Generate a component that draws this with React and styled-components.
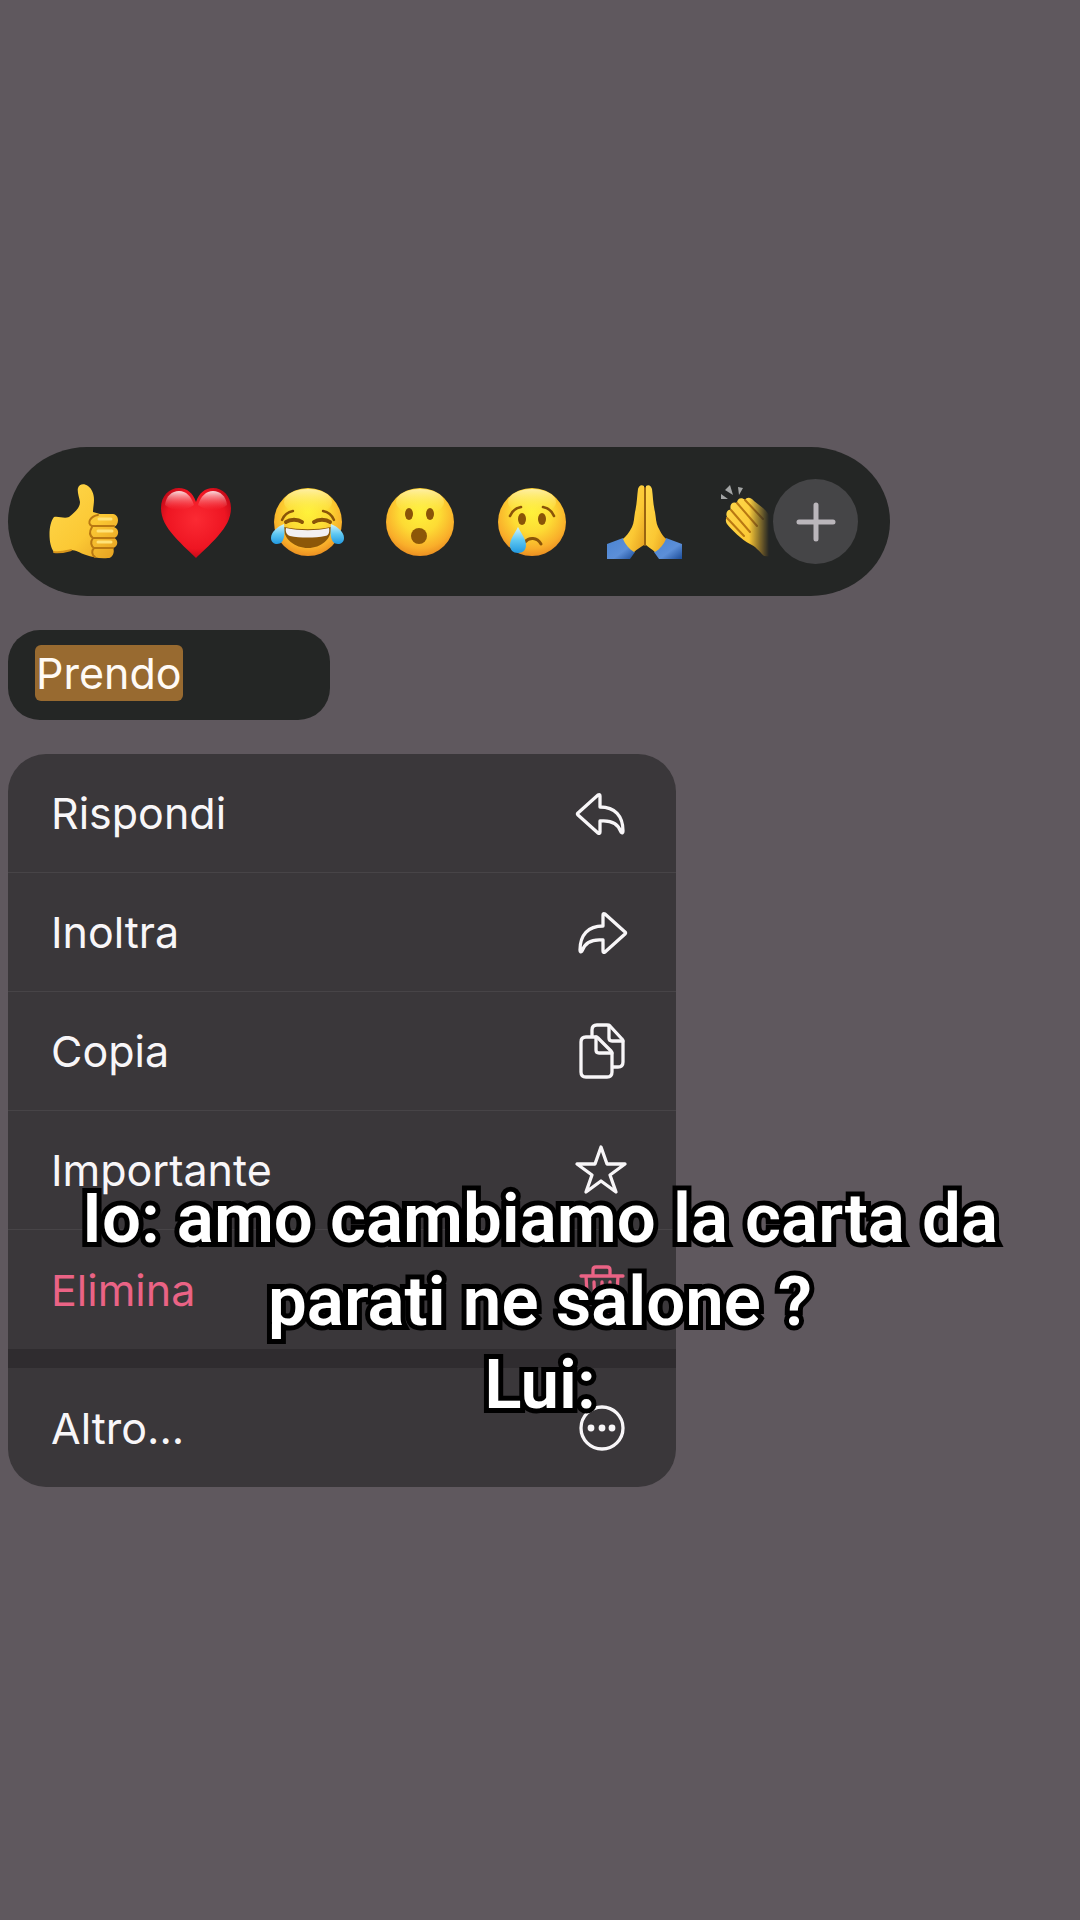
import React from 'react';
import styled, { createGlobalStyle } from 'styled-components';

const GlobalStyle = createGlobalStyle`
  * {
    box-sizing: border-box;
  }
  body {
    margin: 0;
    background-color: #5f585e;
    font-family: Inter, 'Liberation Sans', sans-serif;
  }
  button {
    padding: 0;
    border: 0;
    background: none;
    color: inherit;
    font: inherit;
    cursor: pointer;
  }
`;

const Screen = styled.main`
  position: relative;
  display: flex;
  flex-direction: column;
  align-items: flex-start;
  min-height: 100vh;
  padding: 447px 8px 0;
  overflow: hidden;
`;

const Reactions = styled.section`
  display: flex;
  align-items: center;
  width: 100%;
  max-width: 882px;
  height: 149px;
  margin-bottom: 34px;
  padding: 0 32px 0 37px;
  border-radius: 80px / 75px;
  background-color: #242625;
`;

const EmojiList = styled.div`
  flex: 1;
  display: flex;
  gap: 36px;
  min-width: 0;
  overflow: hidden;
  mask-image: linear-gradient(to right, #000 calc(100% - 24px), transparent calc(100% - 4px));
`;

const EmojiButton = styled.button`
  flex: none;
  width: 76px;
  height: 76px;
  svg {
    display: block;
    overflow: visible;
  }
`;

const PlusButton = styled.button`
  flex: none;
  display: flex;
  align-items: center;
  justify-content: center;
  width: 85px;
  height: 85px;
  border-radius: 50%;
  background-color: #454547;
`;

const Bubble = styled.div`
  display: flex;
  align-items: flex-start;
  width: 322px;
  height: 90px;
  margin-bottom: 34px;
  padding: 15px 27px;
  border-radius: 32px;
  background-color: #242625;
`;

const Highlight = styled.mark`
  padding: 0 1px;
  border-radius: 6px;
  background-color: #986a30;
  color: #fffaf5;
  font-size: 43px;
  line-height: 56px;
`;

const Menu = styled.nav`
  width: 100%;
  max-width: 668px;
  border-radius: 38px;
  background-color: #3a373a;
  overflow: hidden;
`;

const Group = styled.ul`
  margin: 0;
  padding: 0;
  list-style: none;
  & + & {
    border-top: 19px solid #2f2c2f;
  }
`;

const Item = styled.li`
  height: 119px;
  &:not(:last-child) {
    border-bottom: 1px solid #474447;
  }
`;

const ItemButton = styled.button`
  display: flex;
  align-items: center;
  justify-content: space-between;
  width: 100%;
  height: 100%;
  padding: 0 47px 0 43px;
  color: ${(props) => (props.$danger ? '#ea6385' : '#f8f6f8')};
  font-size: 43px;
  line-height: 56px;
`;

const Caption = styled.p`
  position: absolute;
  left: 0;
  right: 0;
  top: 1177px;
  margin: 0;
  color: #fff;
  font-family: Roboto, 'Liberation Sans', sans-serif;
  font-size: 69px;
  font-weight: 600;
  line-height: 83px;
  text-align: center;
  white-space: pre-line;
  -webkit-text-stroke: 10px #000;
  paint-order: stroke fill;
  stroke-linejoin: round;
  pointer-events: none;
`;

const Defs = () => (
  <svg width="0" height="0" style={{ display: 'block', height: 0 }} aria-hidden="true">
    <defs>
      <radialGradient id="face" cx="0.5" cy="0.36" r="0.66">
        <stop offset="0" stopColor="#fff23a" />
        <stop offset="0.45" stopColor="#fddb34" />
        <stop offset="0.8" stopColor="#f9ae2a" />
        <stop offset="1" stopColor="#e88a20" />
      </radialGradient>
      <linearGradient id="shine" x1="0" y1="0" x2="0" y2="1">
        <stop offset="0" stopColor="#fff6c0" stopOpacity="0.8" />
        <stop offset="1" stopColor="#fff23a" stopOpacity="0" />
      </linearGradient>
      <linearGradient id="skin" x1="0" y1="0" x2="1" y2="1">
        <stop offset="0" stopColor="#ffd84c" />
        <stop offset="0.6" stopColor="#fbc834" />
        <stop offset="1" stopColor="#e59f20" />
      </linearGradient>
      <radialGradient id="heart" cx="0.5" cy="0.45" r="0.6">
        <stop offset="0" stopColor="#fb2a33" />
        <stop offset="0.7" stopColor="#ee1522" />
        <stop offset="1" stopColor="#b80615" />
      </radialGradient>
      <linearGradient id="heartShine" x1="0" y1="0" x2="0" y2="1">
        <stop offset="0" stopColor="#fff" stopOpacity="0.85" />
        <stop offset="1" stopColor="#ff5a60" stopOpacity="0" />
      </linearGradient>
      <linearGradient id="tear" x1="0" y1="0" x2="0" y2="1">
        <stop offset="0" stopColor="#d4f3fb" />
        <stop offset="0.5" stopColor="#5fc8f2" />
        <stop offset="1" stopColor="#2299e0" />
      </linearGradient>
      <linearGradient id="sleeve" x1="0" y1="0" x2="1" y2="1">
        <stop offset="0" stopColor="#4a84d2" />
        <stop offset="0.6" stopColor="#5c8fd8" />
        <stop offset="1" stopColor="#1c4c98" />
      </linearGradient>
    </defs>
  </svg>
);

const Emoji = ({ children }) => (
  <svg width="76" height="76" viewBox="0 0 76 76" fill="none" strokeLinecap="round" aria-hidden="true">
    {children}
  </svg>
);

const Face = () => (
  <>
    <circle cx="39" cy="38" r="34" fill="url(#face)" />
    <ellipse cx="39" cy="18" rx="24" ry="13" fill="url(#shine)" />
  </>
);

const ThumbsUp = () => (
  <Emoji>
    <path
      d="M9 33C14 32 19 35 24 33C29 29 35 24 35 18C34 13 32 7 33 4C34 0 39 -1 43 2C47 5 49 10 49 16C49 20 48 24 48 28L55 30H68C75 31 74 41 69 43C75 45 74 53 69 54C74 56 73 63 68 64C70 67 68 74 63 74C55 75 47 73 41 71C35 69 31 66 26 66C20 67 15 69 9 68C3 61 3 40 9 33Z"
      fill="url(#skin)"
    />
    <path d="M53 31C46 32 41 39 47 42H69M47 43C44 48 45 52 48 54H69M48 54C45 58 46 62 49 64H68M49 64C46 67 47 71 50 73" stroke="#b87812" strokeWidth="2" />
    <path d="M26 66C22 67 16 69 9 68" stroke="#d8951c" strokeWidth="2" />
    <path d="M54 35H66M53 47H67M53 58H66" stroke="#ffe277" strokeWidth="3" />
  </Emoji>
);

const Heart = () => (
  <Emoji>
    <path
      d="M39 74C36 71 25 61 17 52C9 43 4 34 4 24C4 12 12 4 22 4C30 4 36 9 39 18C42 9 48 4 56 4C66 4 74 12 74 24C74 34 69 43 61 52C53 61 42 71 39 74Z"
      fill="url(#heart)"
    />
    <path d="M8 21C9 12 15 7 22 7C29 7 34 12 37 21C30 27 16 28 8 21Z" fill="url(#heartShine)" />
    <path d="M41 21C44 12 49 7 56 7C63 7 69 12 70 21C62 28 48 27 41 21Z" fill="url(#heartShine)" />
  </Emoji>
);

const Joy = () => (
  <Emoji>
    <Face />
    <path d="M13 36C15 31 19 28 24 27M54 27C59 28 63 31 65 36" stroke="#8a5408" strokeWidth="2.4" />
    <path d="M17 38C21 35 29 35 33 38M45 38C49 35 57 35 61 38" stroke="#8a5408" strokeWidth="4" />
    <path d="M15 43C30 46 48 46 62 43C63 55 52 64 39 64C26 64 14 55 15 43Z" fill="#8c5708" />
    <path d="M17 44C31 47 47 47 60 44C61 49 59 52 56 52C46 54 31 54 21 52C18 51 16 48 17 44Z" fill="#f2f0f2" />
    <path d="M15 40C8 43 2 48 2 54C2 58 5 60 8 60C16 60 16 49 15 40Z" fill="url(#tear)" />
    <path d="M62 40C69 43 75 48 75 54C75 58 72 60 69 60C61 60 61 49 62 40Z" fill="url(#tear)" />
  </Emoji>
);

const Wow = () => (
  <Emoji>
    <Face />
    <ellipse cx="28" cy="30" rx="4" ry="6" fill="#8a5408" />
    <ellipse cx="49" cy="30" rx="4" ry="6" fill="#8a5408" />
    <circle cx="38" cy="52" r="8" fill="#8c5708" />
  </Emoji>
);

const Cry = () => (
  <Emoji>
    <Face />
    <path d="M17 32C19 27 23 24 28 23M50 23C55 24 59 27 61 32" stroke="#8a5408" strokeWidth="2.6" />
    <ellipse cx="29" cy="35" rx="4" ry="6" fill="#8a5408" />
    <ellipse cx="49" cy="35" rx="4" ry="6" fill="#8a5408" />
    <path d="M32 58C36 53 44 53 48 60" stroke="#8a5408" strokeWidth="3" />
    <path d="M25 43C22 49 17 55 17 61C17 66 20 69 25 69C30 69 33 66 33 61C33 55 28 49 25 43Z" fill="url(#tear)" />
  </Emoji>
);

const Pray = () => (
  <Emoji>
    <path d="M2 60L18 54L30 68L25 75H2Z" fill="url(#sleeve)" />
    <path d="M77 60L61 54L49 68L54 75H77Z" fill="url(#sleeve)" />
    <path d="M39 2C36 0 34 2 33 5C32 12 32 20 30 28C29 34 29 39 27 43C24 49 21 52 18 55C20 60 24 65 29 68C32 65 36 63 39 61Z" fill="url(#skin)" />
    <path d="M41 2C44 0 46 2 47 5C48 12 48 20 50 28C51 34 51 39 53 43C56 49 58 52 61 55C59 60 55 65 50 68C47 65 43 63 41 61Z" fill="url(#skin)" />
    <path d="M40 4V61" stroke="#9a6410" strokeWidth="2" />
  </Emoji>
);

const Clap = () => (
  <Emoji>
    <path d="M4 10L11 15H4ZM8 6L13 1L16 11ZM21 3L26 4L22 11Z" fill="#a3a5a5" />
    <path
      d="M10 33C8 29 11 25 14 26C12 21 15 17 20 19C20 14 25 13 28 16C30 12 35 14 37 17L46 24C58 35 62 48 60 60L56 73L47 72C42 67 38 62 33 60C25 56 14 45 10 40C8 37 9 34 10 33Z"
      fill="url(#skin)"
    />
    <path d="M14 26L33 48M20 19L40 42M28 16L46 35M10 34L27 52" stroke="#b87812" strokeWidth="2" />
  </Emoji>
);

const Icon = ({ children }) => (
  <svg
    width="56"
    height="56"
    viewBox="0 0 56 56"
    fill="none"
    stroke="currentColor"
    strokeWidth="3.3"
    strokeLinecap="round"
    strokeLinejoin="round"
    aria-hidden="true"
  >
    {children}
  </svg>
);

const ARROW = 'M25 10L5 28Q4 29 5 30L25 48Q27 49 27 47V36C38 35 45 38 48 47Q50 49 50 46C50 31 42 22 27 22V11Q27 9 25 10Z';

const ReplyIcon = () => (
  <Icon>
    <path d={ARROW} />
  </Icon>
);

const ForwardIcon = () => (
  <Icon>
    <path d={ARROW} transform="matrix(-1 0 0 1 57 0)" />
  </Icon>
);

const CopyIcon = () => (
  <Icon>
    <path d="M19 13V7Q19 2 24 2H34Q36 2 37 3L49 16Q50 17 50 19V39Q50 44 45 44H40" />
    <path d="M36 3V15Q36 18 39 18H50" />
    <path d="M22 14H13Q8 14 8 19V49Q8 54 13 54H34Q39 54 39 49V31Q39 29 38 28L25 15Q24 14 22 14Z" />
    <path d="M23 14V27Q23 30 26 30H39" />
  </Icon>
);

const StarIcon = () => (
  <Icon>
    <path d="M28 5L34 22H52L37 33L43 50L28 39L13 50L19 33L4 22H22Z" />
  </Icon>
);

const TrashIcon = () => (
  <Icon>
    <path d="M8 14H50M20 14V8Q20 5 23 5H34Q37 5 37 8V14M13 14L15 48Q15 52 19 52H39Q43 52 43 48L45 14M21 20L22 45M29 20V45M37 20L36 45" />
  </Icon>
);

const MoreIcon = () => (
  <Icon>
    <circle cx="29" cy="28" r="21" />
    <g fill="currentColor" stroke="none">
      <circle cx="18" cy="28" r="3.4" />
      <circle cx="29" cy="28" r="3.4" />
      <circle cx="39" cy="28" r="3.4" />
    </g>
  </Icon>
);

const reactions = [
  { name: 'Pollice in su', Art: ThumbsUp },
  { name: 'Cuore', Art: Heart },
  { name: 'Risata', Art: Joy },
  { name: 'Stupore', Art: Wow },
  { name: 'Pianto', Art: Cry },
  { name: 'Preghiera', Art: Pray },
  { name: 'Applauso', Art: Clap },
];

const groups = [
  [
    { label: 'Rispondi', Glyph: ReplyIcon },
    { label: 'Inoltra', Glyph: ForwardIcon },
    { label: 'Copia', Glyph: CopyIcon },
    { label: 'Importante', Glyph: StarIcon },
    { label: 'Elimina', Glyph: TrashIcon, danger: true },
  ],
  [{ label: 'Altro...', Glyph: MoreIcon }],
];

const App = () => {
  return (
    <>
      <GlobalStyle />
      <Defs />
      <Screen>
        <Reactions>
          <EmojiList>
            {reactions.map(({ name, Art }) => (
              <EmojiButton key={name} type="button" aria-label={name}>
                <Art />
              </EmojiButton>
            ))}
          </EmojiList>
          <PlusButton type="button" aria-label="Aggiungi">
            <svg width="40" height="40" viewBox="0 0 40 40" stroke="#bab6bb" strokeWidth="5" strokeLinecap="round">
              <path d="M20 3V37M3 20H37" />
            </svg>
          </PlusButton>
        </Reactions>
        <Bubble>
          <Highlight>Prendo</Highlight>
        </Bubble>
        <Menu>
          {groups.map((items) => (
            <Group key={items[0].label}>
              {items.map(({ label, Glyph, danger }) => (
                <Item key={label}>
                  <ItemButton type="button" $danger={danger}>
                    {label}
                    <Glyph />
                  </ItemButton>
                </Item>
              ))}
            </Group>
          ))}
        </Menu>
        <Caption>{'Io: amo cambiamo la carta da\nparati ne salone ?\nLui:'}</Caption>
      </Screen>
    </>
  );
};

export default App;
